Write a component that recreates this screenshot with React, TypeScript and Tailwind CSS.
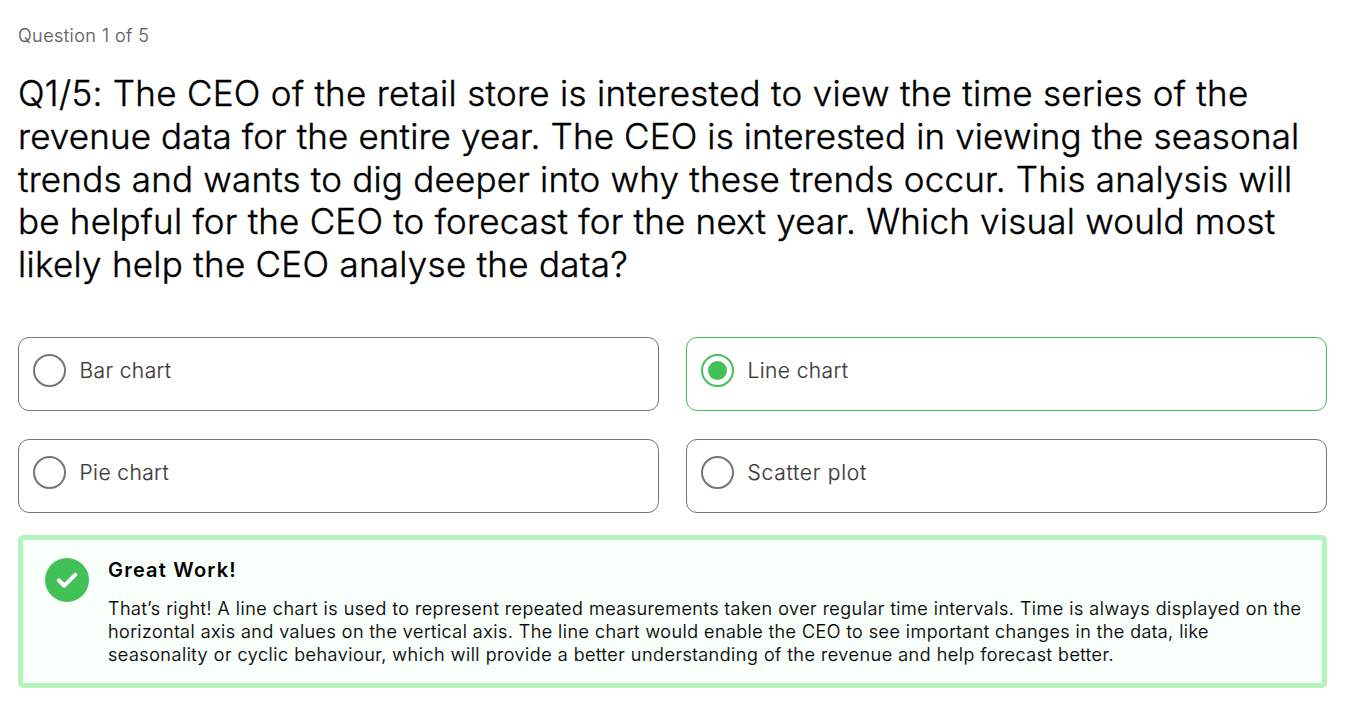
import { useState } from "react";

const questionLines = [
  { text: "Q1/5: The CEO of the retail store is interested to view the time series of the", tracking: "tracking-[0.295px]" },
  { text: "revenue data for the entire year. The CEO is interested in viewing the seasonal", tracking: "tracking-[0.135px]" },
  { text: "trends and wants to dig deeper into why these trends occur. This analysis will", tracking: "tracking-[0.205px]" },
  { text: "be helpful for the CEO to forecast for the next year. Which visual would most", tracking: "tracking-[0.215px]" },
  { text: "likely help the CEO analyse the data?", tracking: "tracking-[0.28px]" },
];

const options = [
  { label: "Bar chart", tracking: "tracking-[0.4px]" },
  { label: "Line chart", tracking: "tracking-[0.4px]" },
  { label: "Pie chart", tracking: "tracking-[0.4px]" },
  { label: "Scatter plot", tracking: "tracking-[0.75px]" },
];

const feedbackLines = [
  {
    text: "That’s right! A line chart is used to represent repeated measurements taken over regular time intervals. Time is always displayed on the",
    tracking: "tracking-[0.51px]",
  },
  {
    text: "horizontal axis and values on the vertical axis. The line chart would enable the CEO to see important changes in the data, like",
    tracking: "tracking-[0.466px]",
  },
  {
    text: "seasonality or cyclic behaviour, which will provide a better understanding of the revenue and help forecast better.",
    tracking: "tracking-[0.525px]",
  },
];

type OptionProps = {
  label: string;
  tracking: string;
  selected: boolean;
  onSelect: () => void;
};

function Option({ label, tracking, selected, onSelect }: OptionProps) {
  return (
    <button
      type="button"
      role="radio"
      aria-checked={selected}
      onClick={onSelect}
      className={`flex h-[74px] items-start gap-[13.5px] rounded-[11px] border pt-4 pl-3.5 text-left ${
        selected ? "border-[#43c159]" : "border-[#757575]"
      }`}
    >
      <span
        className={`flex size-[33px] shrink-0 items-center justify-center rounded-full border-2 ${
          selected ? "border-[#43c159]" : "border-[#757575]"
        }`}
      >
        {selected && <span className="size-[19px] rounded-full bg-[#43c159]" />}
      </span>
      <span className={`text-[21px] leading-[34px] text-[#3c3c3c] [-webkit-text-stroke:0.2px] ${tracking}`}>{label}</span>
    </button>
  );
}

export default function App() {
  const [selected, setSelected] = useState(1);

  return (
    <main className="min-h-screen w-[1353px] bg-white pt-6 pr-[26px] pl-[18px] font-['Inter',sans-serif] font-light text-black">
      <p className="text-[18px] leading-6 tracking-[0.45px] text-[#5f5f5f] [-webkit-text-stroke:0.2px]">Question 1 of 5</p>

      <h1 className="mt-6 text-[35px] leading-[42.8px] whitespace-nowrap [-webkit-text-stroke:0.4px]">
        {questionLines.map((line) => (
          <span key={line.text} className={`block ${line.tracking}`}>
            {line.text}
          </span>
        ))}
      </h1>

      <div role="radiogroup" className="mt-[51px] grid grid-cols-2 gap-x-[27px] gap-y-7">
        {options.map((option, index) => (
          <Option
            key={option.label}
            label={option.label}
            tracking={option.tracking}
            selected={selected === index}
            onSelect={() => setSelected(index)}
          />
        ))}
      </div>

      <section className="mt-[22px] flex h-[153px] gap-[19px] rounded-[5px] border-5 border-[#b2f4bb] bg-[#f9fffa] pt-[18px] pl-[22px]">
        <svg className="size-11 shrink-0" viewBox="0 0 44 44" fill="none" aria-hidden="true">
          <circle cx="22" cy="22" r="22" fill="#43c159" />
          <path d="M13.8 22.3l5.5 5.4L30.3 16.6" stroke="#fff" strokeWidth="4" strokeLinecap="round" strokeLinejoin="round" />
        </svg>
        <div className="whitespace-nowrap">
          <h2 className="text-[20px] leading-6 font-semibold tracking-[1.2px]">Great Work!</h2>
          <p className="mt-[15px] text-[18px] leading-[23px] [-webkit-text-stroke:0.2px]">
            {feedbackLines.map((line) => (
              <span key={line.text} className={`block ${line.tracking}`}>
                {line.text}
              </span>
            ))}
          </p>
        </div>
      </section>
    </main>
  );
}
